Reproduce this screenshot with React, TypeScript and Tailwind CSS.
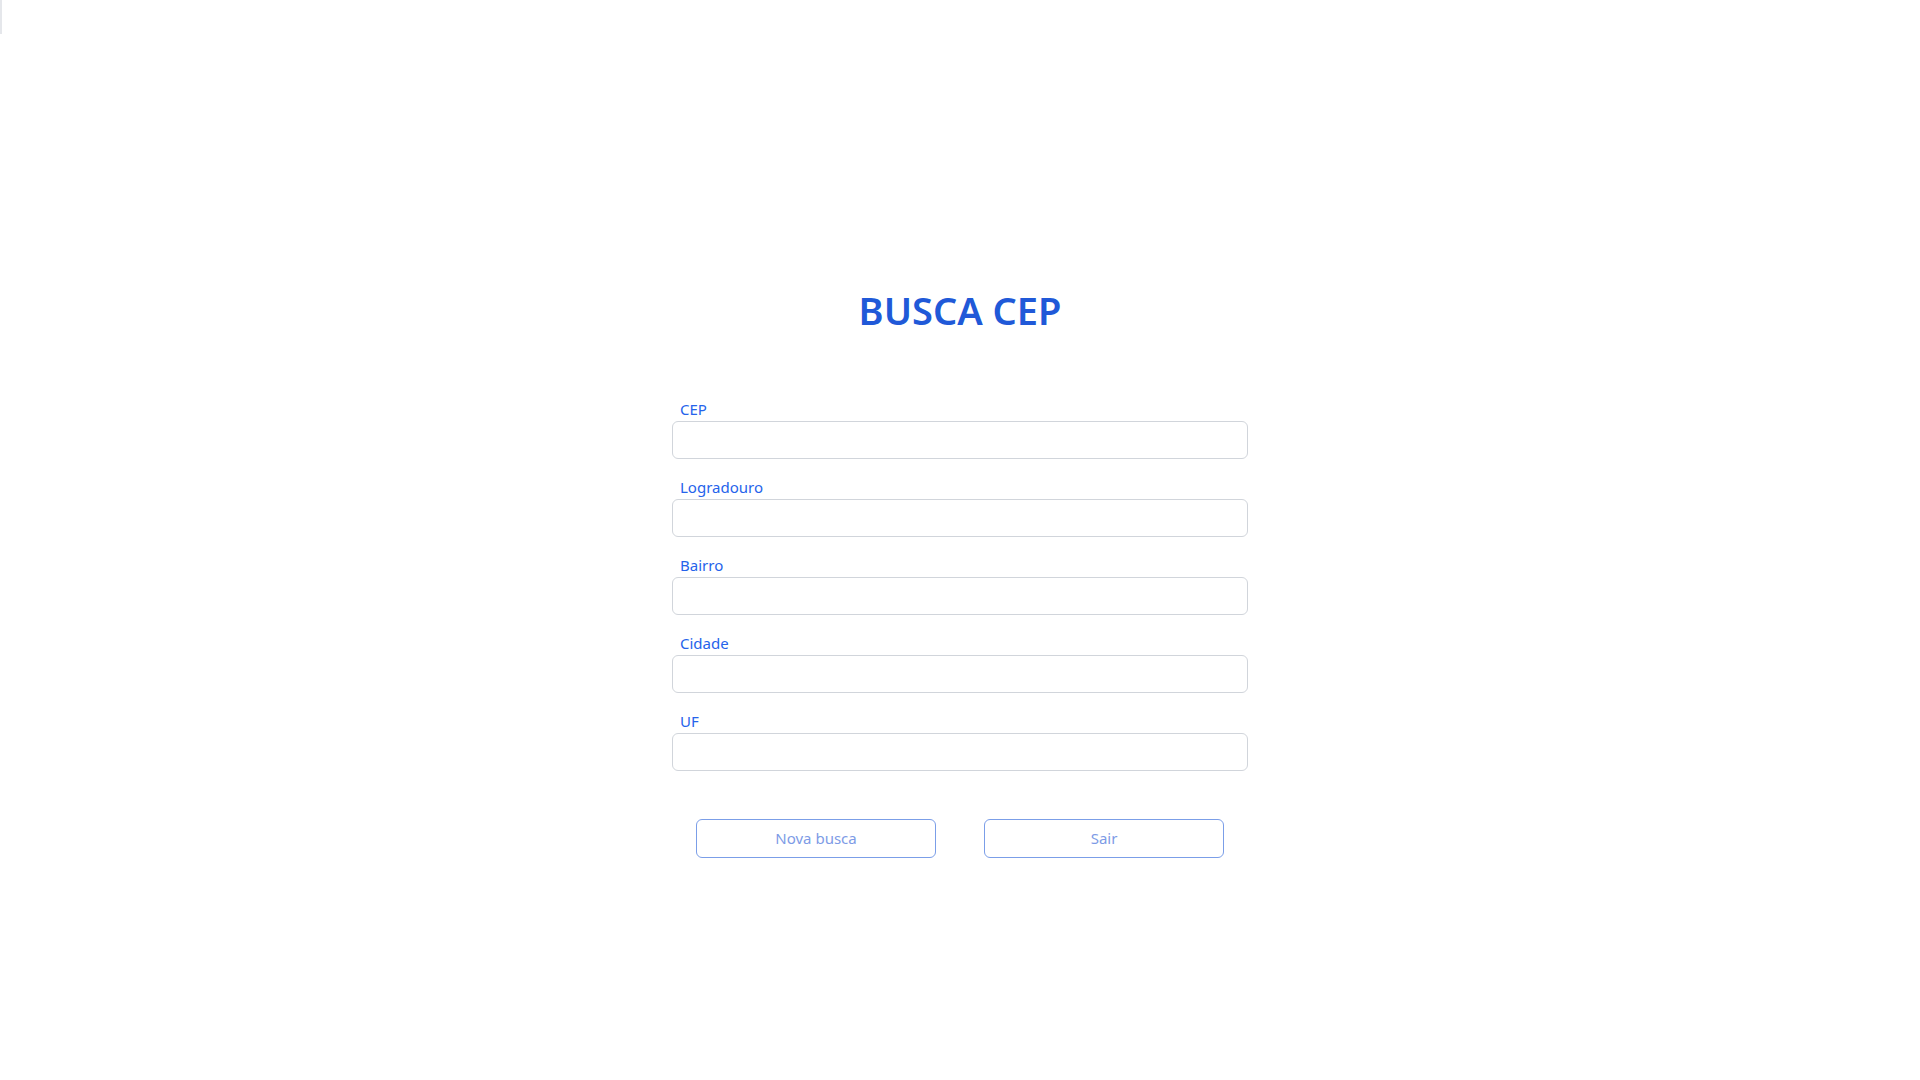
import React from "react";

const fields = ["CEP", "Logradouro", "Bairro", "Cidade", "UF"];

const App = () => {
  return (
    <div className="min-h-screen w-full bg-white" style={{ fontFamily: '"Noto Sans", "Open Sans", sans-serif' }}>
      <div className="h-[102px] w-full flex justify-between items-end">
        <div className="w-[2px] h-[34px] bg-[#e5e7eb] self-start" />
      </div>
      <div className="flex flex-col items-center pt-[186px]">
        <h1 className="text-[38px] leading-[44px] font-semibold text-[#2059d8]">BUSCA CEP</h1>
        <form className="w-[576px] mt-[67px] flex flex-col gap-[18px]">
          {fields.map((f) => (
            <div key={f} className="flex flex-col">
              <label className="pl-2 text-[15px] leading-[20px] text-[#2563eb] mb-[2px]">{f}</label>
              <input
                type="text"
                className="h-[38px] w-full rounded-md border border-[#d1d5db] bg-white px-3 outline-none"
              />
            </div>
          ))}
        </form>
        <div className="flex gap-[48px] mt-[48px]">
          <button className="w-[240px] h-[39px] rounded-md border border-[#7b9ee8] text-[15px] text-[#7d9be6] bg-white">
            Nova busca
          </button>
          <button className="w-[240px] h-[39px] rounded-md border border-[#7b9ee8] text-[15px] text-[#7d9be6] bg-white">
            Sair
          </button>
        </div>
      </div>
    </div>
  );
};

export default App;
